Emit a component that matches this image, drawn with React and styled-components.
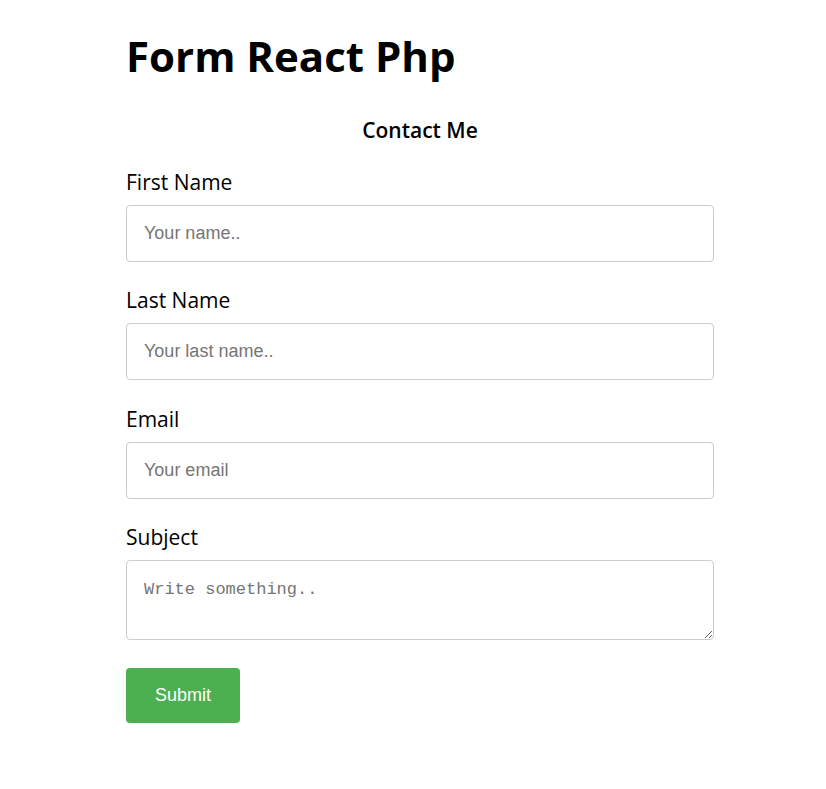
import React from 'react';
import styled, { createGlobalStyle } from 'styled-components';

const GlobalStyle = createGlobalStyle`
    body {
        margin: 8px;
        background: #fff;
        font-family: "Open Sans", "Noto Sans", sans-serif;
        color: #000;
    }
`;

const Page = styled.div`
    padding-left: 118px;
    padding-top: 19px;
`;

const Title = styled.h1`
    margin: 0;
    font-size: 42px;
    line-height: 58px;
    font-weight: 700;
`;

const Form = styled.form`
    width: 588px;
    display: flex;
    flex-direction: column;
`;

const FormTitle = styled.h3`
    margin: 33px 0 28px;
    text-align: center;
    font-size: 21px;
    line-height: 24px;
    font-weight: 600;
`;

const Label = styled.label`
    font-size: 21px;
    line-height: 24px;
    margin-bottom: 11px;
`;

const Input = styled.input`
    box-sizing: border-box;
    width: 100%;
    height: 57px;
    padding: 0 17px;
    border: 1px solid #ccc;
    border-radius: 4px;
    font-family: "Liberation Sans", Arial, sans-serif;
    font-size: 18px;
    margin-bottom: 26.3px;

    &::placeholder {
        color: #757575;
    }
`;

const TextArea = styled.textarea`
    box-sizing: border-box;
    width: 100%;
    height: 80.4px;
    padding: 19px 17px 17px;
    border: 1px solid #ccc;
    border-radius: 4px;
    font-family: "Liberation Mono", monospace;
    font-size: 17px;
    margin-bottom: 28px;

    &::placeholder {
        color: #757575;
    }
`;

const SubmitButton = styled.button`
    align-self: flex-start;
    width: 114px;
    height: 55px;
    border: none;
    border-radius: 4px;
    background: #4caf50;
    color: #fff;
    font-family: "Liberation Sans", Arial, sans-serif;
    font-size: 18px;
    cursor: pointer;
`;

const App = () => {
    return (
        <Page>
            <GlobalStyle />
            <Title>Form React Php</Title>
            <Form onSubmit={e => e.preventDefault()}>
                <FormTitle>Contact Me</FormTitle>
                <Label htmlFor="fname">First Name</Label>
                <Input id="fname" type="text" placeholder="Your name.." />
                <Label htmlFor="lname">Last Name</Label>
                <Input id="lname" type="text" placeholder="Your last name.." />
                <Label htmlFor="email">Email</Label>
                <Input id="email" type="email" placeholder="Your email" />
                <Label htmlFor="subject">Subject</Label>
                <TextArea id="subject" placeholder="Write something.." />
                <SubmitButton type="submit">Submit</SubmitButton>
            </Form>
        </Page>
    );
};

export default App;
